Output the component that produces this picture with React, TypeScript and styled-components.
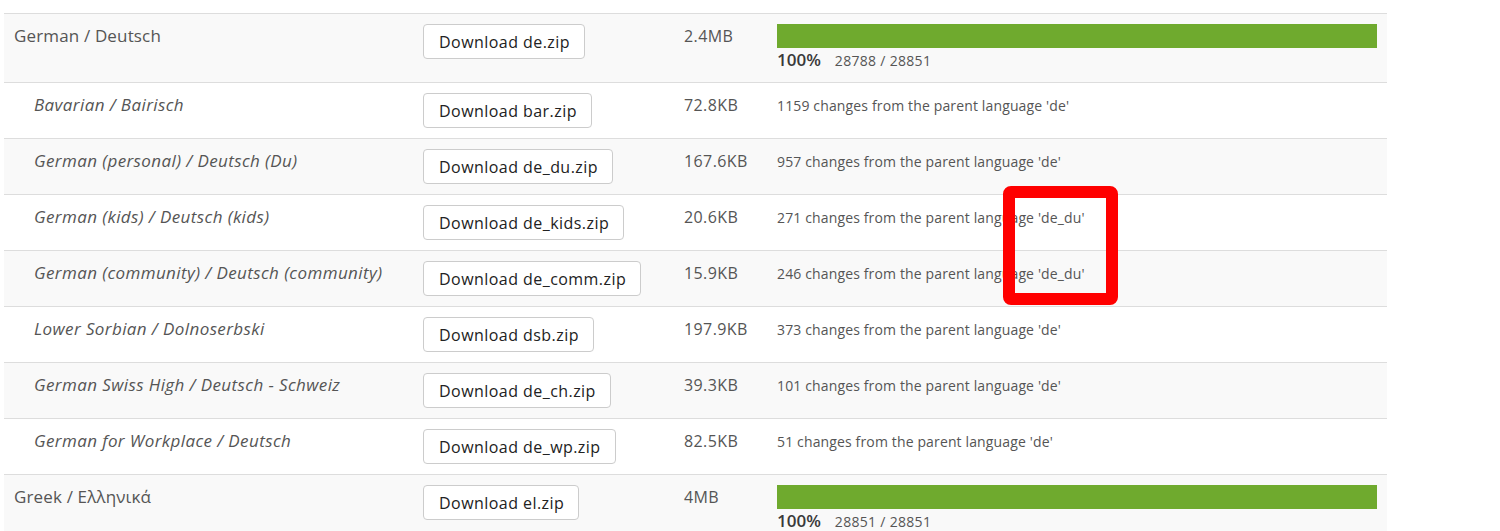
import React from "react";
import styled, { createGlobalStyle } from "styled-components";

const GlobalStyle = createGlobalStyle`
  body {
    margin: 0;
    background: #fff;
    font-family: "Open Sans", "Noto Sans", sans-serif;
    color: #555;
  }
`;

const Page = styled.div`
  position: relative;
  padding: 13px 0 0 4px;
`;

const Table = styled.div`
  width: 1383px;
  border-bottom: 1px solid #ddd;
`;

const Row = styled.div<{ $striped: boolean }>`
  display: grid;
  grid-template-columns: 409px 261px 93px 1fr;
  border-top: 1px solid #ddd;
  background: ${(p) => (p.$striped ? "#f9f9f9" : "#fff")};
`;

const Cell = styled.div`
  padding: 10px;
  font-size: 16px;
  line-height: 24px;
`;

const NameCell = styled(Cell)<{ $child: boolean }>`
  padding-left: ${(p) => (p.$child ? "30px" : "10px")};
  font-size: 17px;
  font-style: ${(p) => (p.$child ? "italic" : "normal")};
  letter-spacing: ${(p) => (p.$child ? "0.4px" : "0.15px")};
  color: #555;
`;

const Button = styled.button`
  font-family: "Open Sans", "Noto Sans", sans-serif;
  font-size: 16px;
  line-height: 21px;
  letter-spacing: 0.45px;
  padding: 7px 14px 5px 15px;
  color: #222;
  background: #fff;
  border: 1px solid #ccc;
  border-radius: 4px;
  cursor: pointer;
`;

const Size = styled(Cell)`
  color: #555;
  letter-spacing: 0.4px;
`;

const Bar = styled.div`
  height: 24px;
  background: #6faa2e;
`;

const Stats = styled.div`
  display: flex;
  align-items: baseline;
  gap: 14px;
  height: 24px;
  line-height: 24px;
`;

const Percent = styled.span`
  font-size: 17px;
  font-weight: 600;
  color: #3a3a3a;
`;

const Count = styled.span`
  font-size: 14px;
  letter-spacing: 0.3px;
  color: #555;
`;

const Changes = styled.span`
  font-size: 14px;
  letter-spacing: 0.14px;
  color: #555;
`;

const Marker = styled.div`
  position: absolute;
  left: 1003px;
  top: 186px;
  width: 115px;
  height: 119px;
  box-sizing: border-box;
  border: 12px solid #ff0000;
  border-radius: 8px;
  pointer-events: none;
`;

type Lang = {
  name: string;
  file: string;
  size: string;
  child?: boolean;
  done?: number;
  total?: number;
  changes?: number;
  parent?: string;
};

const langs: Lang[] = [
  { name: "German / Deutsch", file: "de", size: "2.4MB", done: 28788, total: 28851 },
  { name: "Bavarian / Bairisch", file: "bar", size: "72.8KB", child: true, changes: 1159, parent: "de" },
  { name: "German (personal) / Deutsch (Du)", file: "de_du", size: "167.6KB", child: true, changes: 957, parent: "de" },
  { name: "German (kids) / Deutsch (kids)", file: "de_kids", size: "20.6KB", child: true, changes: 271, parent: "de_du" },
  { name: "German (community) / Deutsch (community)", file: "de_comm", size: "15.9KB", child: true, changes: 246, parent: "de_du" },
  { name: "Lower Sorbian / Dolnoserbski", file: "dsb", size: "197.9KB", child: true, changes: 373, parent: "de" },
  { name: "German Swiss High / Deutsch - Schweiz", file: "de_ch", size: "39.3KB", child: true, changes: 101, parent: "de" },
  { name: "German for Workplace / Deutsch", file: "de_wp", size: "82.5KB", child: true, changes: 51, parent: "de" },
  { name: "Greek / Ελληνικά", file: "el", size: "4MB", done: 28851, total: 28851 },
];

const App = () => {
  return (
    <Page>
      <GlobalStyle />
      <Table>
        {langs.map((l, i) => (
          <Row key={l.file} $striped={i % 2 === 0}>
            <NameCell $child={!!l.child}>{l.name}</NameCell>
            <Cell>
              <Button>Download {l.file}.zip</Button>
            </Cell>
            <Size>{l.size}</Size>
            <Cell>
              {l.child ? (
                <Changes>
                  {l.changes} changes from the parent language '{l.parent}'
                </Changes>
              ) : (
                <>
                  <Bar />
                  <Stats>
                    <Percent>{Math.round(((l.done || 0) / (l.total || 1)) * 100)}%</Percent>
                    <Count>
                      {l.done} / {l.total}
                    </Count>
                  </Stats>
                </>
              )}
            </Cell>
          </Row>
        ))}
      </Table>
      <Marker />
    </Page>
  );
};

export default App;
